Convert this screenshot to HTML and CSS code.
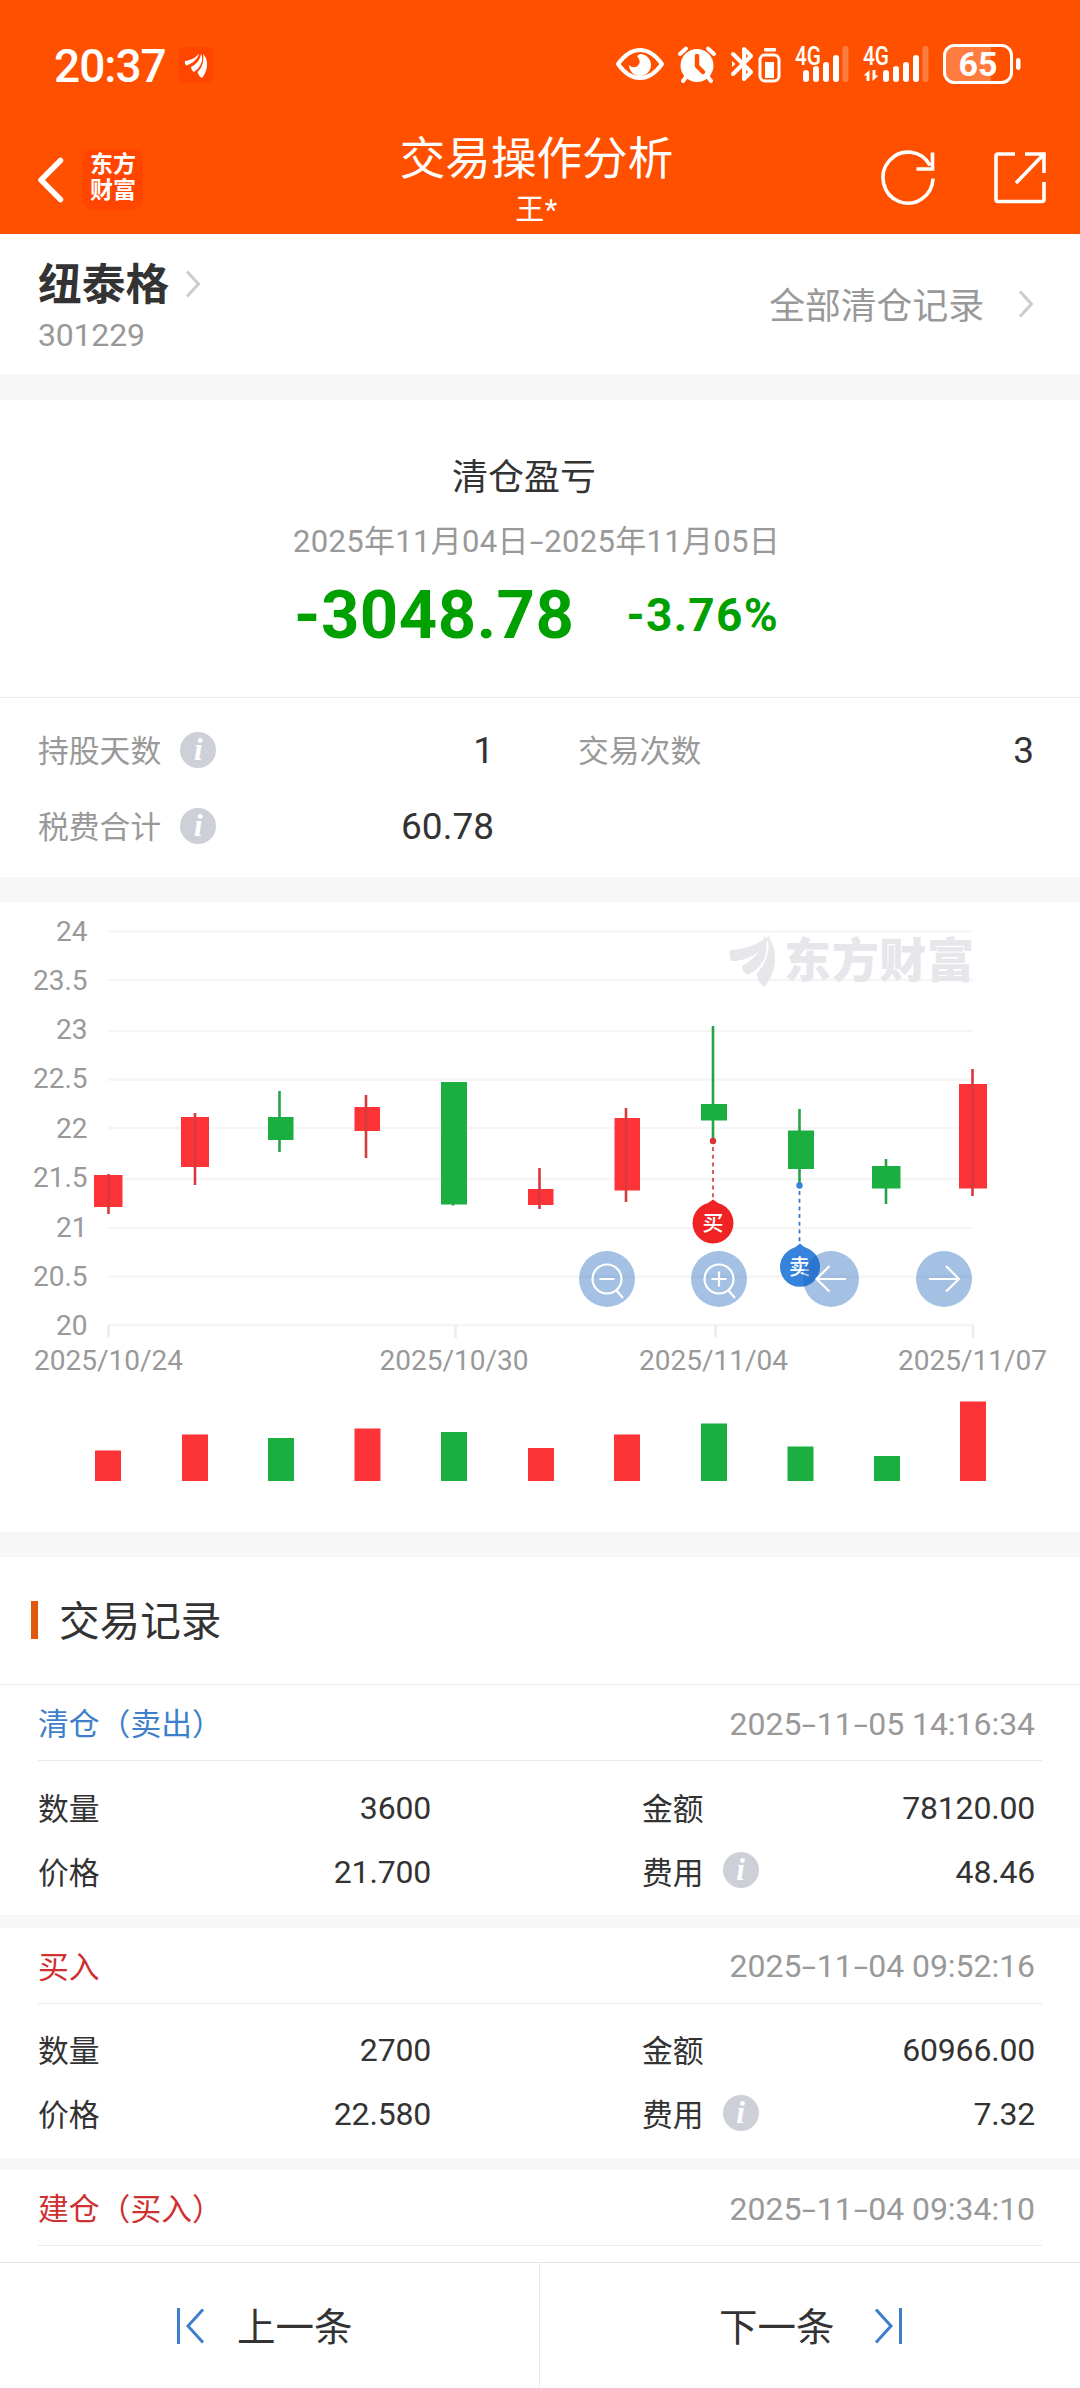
FILE: index.html
```html
<!DOCTYPE html>
<html lang="zh-CN">
<head>
<meta charset="utf-8">
<title>交易操作分析</title>
<link rel="stylesheet" href="styles.css">
</head>
<body>
<div class="screen">
  <header class="header">
    <div class="status">
      <div class="status-left">
        <span class="time">20:37</span>
        <svg class="app-dot" viewBox="0 0 36 36">
          <rect width="36" height="36" rx="7" fill="#ff4500"/>
          <g fill="#fff">
            <path d="M7 14C12 13.500 18 11 21 6.500C20 12 14 17 8 18.500Q6 16 7 14Z"/>
            <path d="M13 20C19 17 22.500 12 23 6.500C26 13 23 20 16 25Q13 23 13 20Z"/>
            <path d="M19.500 25C25 20 26 13 25 7C31 12 30 24 24 31Q21 30 19.500 25Z"/>
          </g>
        </svg>
      </div>
      <div class="status-right">
        <svg class="ic-eye" viewBox="0 0 48 40">
          <path d="M2 20Q12 6 24 6T46 20Q36 34 24 34T2 20Z" fill="none" stroke="#fff" stroke-width="4" stroke-linejoin="round"/>
          <path d="M24 10A11 11 0 1 1 13 21Q17 25 21.500 22Q26 18 21 12Z" fill="#fff"/>
        </svg>
        <svg class="ic-alarm" viewBox="0 0 38 40">
          <circle cx="19" cy="21.500" r="16.500" fill="#fff"/>
          <path d="M2 10L8 4.500M36 10L30 4.500M8 33L5 37M30 33L33 37" stroke="#fff" stroke-width="4" stroke-linecap="round"/>
          <path d="M19 12V22L25 28" fill="none" stroke="#ff5000" stroke-width="4.500" stroke-linecap="round" stroke-linejoin="round"/>
        </svg>
        <svg class="ic-bt" viewBox="0 0 50 40">
          <path d="M2 10L20 28L13 35V5L20 12L2 30" fill="none" stroke="#fff" stroke-width="4" stroke-linejoin="round" stroke-linecap="round"/>
          <path d="M1 17L4.500 20L1 23Z" fill="#fff"/>
          <rect x="29" y="11" width="19" height="26" rx="5" fill="none" stroke="#fff" stroke-width="3"/>
          <rect x="33" y="4" width="12" height="3.500" rx="1" fill="#fff"/>
          <rect x="34" y="18" width="9" height="16" fill="#fff"/>
        </svg>
        <svg class="ic-sim" viewBox="0 0 54 40">
          <text x="0" y="22.500" class="net" textLength="26" lengthAdjust="spacingAndGlyphs">4G</text>
          <g fill="#fff">
            <rect x="8" y="28" width="6" height="12" rx="3"/><rect x="18" y="24" width="6" height="16" rx="3"/>
            <rect x="28" y="20" width="6" height="20" rx="3"/><rect x="38" y="13" width="6" height="27" rx="3"/>
            <rect x="47.500" y="4" width="6" height="36" rx="3" opacity=".25"/>
          </g>
        </svg>
        <svg class="ic-sim2" viewBox="0 0 66 40">
          <text x="0" y="22.500" class="net" textLength="26" lengthAdjust="spacingAndGlyphs">4G</text>
          <path d="M0.500 33.500L6.500 28V39H3.500V33.500ZM15.500 33.500L9.500 39V28H12.500V33.500Z" fill="#fff"/>
          <g fill="#fff">
            <rect x="20" y="28" width="6" height="12" rx="3"/><rect x="30" y="24" width="6" height="16" rx="3"/>
            <rect x="40" y="20" width="6" height="20" rx="3"/><rect x="50" y="13" width="6" height="27" rx="3"/>
            <rect x="59.500" y="4" width="6" height="36" rx="3" opacity=".25"/>
          </g>
        </svg>
        <svg class="ic-bat" viewBox="0 0 78 40">
          <path d="M3 12Q3 3 12 3H48V37H12Q3 37 3 28Z" fill="#fff" opacity=".25"/>
          <rect x="1.500" y="1.500" width="67" height="37" rx="10" fill="none" stroke="#fff" stroke-width="3"/>
          <rect x="73" y="14" width="4.500" height="12" rx="2.200" fill="#fff"/>
          <text x="35" y="32" class="level" text-anchor="middle">65</text>
        </svg>
      </div>
    </div>
    <div class="nav">
      <div class="nav-left">
        <svg class="back" viewBox="0 0 28 48"><path d="M24.500 4.500L5 24L24.500 43.500" fill="none" stroke="#fff" stroke-width="5.500" stroke-linecap="round" stroke-linejoin="round"/></svg>
        <div class="brand"><span>东方</span><span>财富</span></div>
      </div>
      <div class="nav-title"><h1>交易操作分析</h1><p>王*</p></div>
      <div class="nav-right">
        <svg class="reload" viewBox="0 0 54 54"><path d="M51 27.500A25 25.500 0 1 1 48 14.500" fill="none" stroke="#fff" stroke-width="3.600"/><path d="M50.500 1.500V18H34.500" fill="none" stroke="#fff" stroke-width="3.600"/></svg>
        <svg class="share" viewBox="0 0 52 52"><path d="M21 2H4Q2 2 2 4V47.500Q2 49.500 4 49.500H48Q50 49.500 50 47.500V30M31 2H50V21M50 2L22 31" fill="none" stroke="#fff" stroke-width="3.600"/></svg>
      </div>
    </div>
  </header>

  <section class="stock">
    <div class="stock-id">
      <div class="stock-name">纽泰格<svg class="chev" viewBox="0 0 16 28"><path d="M2 1.500L13.500 14L2 26.500" fill="none" stroke="#ccc" stroke-width="3"/></svg></div>
      <div class="stock-code">301229</div>
    </div>
    <div class="all"><span>全部清仓记录</span><svg class="chev" viewBox="0 0 16 28"><path d="M2 1.500L13.500 14L2 26.500" fill="none" stroke="#ccc" stroke-width="3"/></svg></div>
  </section>

  <section class="profit">
    <h2>清仓盈亏</h2>
    <p class="range">2025年11月04日<span class="dash">-</span>2025年11月05日</p>
    <div class="result"><span class="amount">-3048.78</span><span class="rate">-3.76%</span></div>
  </section>

  <section class="stats">
    <div class="stat"><span>持股天数</span><i class="info">i</i><b>1</b></div>
    <div class="stat"><span>交易次数</span><b>3</b></div>
    <div class="stat"><span>税费合计</span><i class="info">i</i><b>60.78</b></div>
  </section>

  <section class="chart">
    <svg viewBox="0 902 1080 630" width="1080" height="630">
      <path class="grid" d="M108 931.500H973M108 980H973M108 1031H973M108 1079.500H973M108 1128H973M108 1179H973M108 1228H973M108 1276.500H973M108 1325H973"/>
      <path class="tick" d="M108.500 1325V1338M455.500 1325V1338M715.500 1325V1338M973 1325V1338"/>
      <g class="mark">
        <path d="M730 950Q752 949 771 935C761 955 746 961 731 961Q729 955 730 950Z"/>
        <path d="M742 966C757 957 762 949 763.500 939L765 935C770 956 762 968 747 975Q742 971 742 966Z"/>
        <path d="M757 973C769 960 770 947 767.500 936C779 949 777 974 764 987Q757 982 757 973Z"/>
        <text x="784" y="977" textLength="190">东方财富</text>
      </g>
      <g class="axis" text-anchor="end">
        <text x="87.500" y="941">24</text><text x="87.500" y="990">23.5</text><text x="87.500" y="1039">23</text>
        <text x="87.500" y="1088">22.5</text><text x="87.500" y="1138">22</text><text x="87.500" y="1187">21.5</text>
        <text x="87.500" y="1236.500">21</text><text x="87.500" y="1285.500">20.5</text><text x="87.500" y="1335">20</text>
      </g>
      <g class="axis" text-anchor="middle">
        <text x="108.500" y="1369.500">2025/10/24</text><text x="454" y="1369.500">2025/10/30</text>
        <text x="713.500" y="1369.500">2025/11/04</text><text x="972.500" y="1369.500">2025/11/07</text>
      </g>
      <g class="up">
        <path d="M94 1175h28.500v32h-28.500zM181 1117h28v50h-28zM354.500 1107h25.500v24h-25.500zM528 1189h25.500v16h-25.500zM614.500 1118h25.500v72.500h-25.500zM959 1084h28v104.500h-28z"/>
        <path class="wick" d="M108.500 1174V1214M195 1113V1185M366 1095V1158M539.500 1168V1209M626 1108V1202M972.500 1069V1196"/>
        <path d="M95 1450.500h26V1481h-26zM182 1434.500h26V1481h-26zM354.500 1428.500h26V1481h-26zM528 1448h26V1481h-26zM614 1434.500h26V1481h-26zM960 1401.500h26V1481h-26z"/>
      </g>
      <g class="down">
        <path class="wick" d="M279.500 1091V1152M453 1190V1205.500M713 1026V1139M799.500 1109V1184M886 1159V1204"/>
        <path d="M268 1117h25.500v23h-25.500zM441 1082h26v122.500h-26zM701 1104h26v16.500h-26zM788 1130.500h26v38.500h-26zM872 1166h28.500v22.500h-28.500z"/>
        <path d="M268 1438h26V1481h-26zM441 1432h26V1481h-26zM701 1423.500h26V1481h-26zM787.500 1446.500h26V1481h-26zM874 1456h26V1481h-26z"/>
      </g>
      <g class="pin" fill="#ef2323">
        <circle cx="713" cy="1141" r="3.200" fill="#d63333"/>
        <path d="M713 1147V1200" stroke="#d0504e" stroke-width="1.800" stroke-dasharray="4 3.700"/>
        <path d="M713 1199.500Q717 1203 722 1204.500A20.500 20.500 0 1 1 704 1204.500Q709 1203 713 1199.500Z"/>
        <text x="713" y="1229.500">买</text>
      </g>
      <g class="pin" fill="#3583dd">
        <circle cx="799.500" cy="1185.500" r="3.200"/>
        <path d="M799.500 1191V1243" stroke="#3a7ccb" stroke-width="1.800" stroke-dasharray="4 3.700"/>
        <path d="M800 1243.500Q804 1247.500 809 1249A20 20 0 1 1 791 1249Q796 1247.500 800 1243.500Z"/>
        <text x="799.500" y="1274">卖</text>
      </g>
      <g class="btn">
        <circle cx="607" cy="1279" r="28"/><circle cx="719" cy="1279" r="28"/>
        <circle cx="831" cy="1279" r="28"/><circle cx="944" cy="1279" r="28"/>
      </g>
      <g fill="none" stroke="#fff" stroke-width="2.200">
        <circle cx="607" cy="1279" r="14.500"/><path d="M599.500 1279H614.500M616 1290L623 1298"/>
        <circle cx="719" cy="1279" r="14.500"/><path d="M711.500 1279H726.500M719 1271.500V1286.500M728 1290L735 1298"/>
        <path d="M846 1279H817M829.500 1266L816.500 1279L829.500 1291.500M929 1279H958.500M946 1266L959 1279L946 1291.500"/>
      </g>
    </svg>
  </section>

  <section class="records">
    <h2 class="records-title">交易记录</h2>
    <article class="record">
      <div class="record-head sell"><span>清仓（卖出）</span><time>2025<span class="dash">-</span>11<span class="dash">-</span>05 14:16:34</time></div>
      <div class="record-body">
        <span>数量</span><b>3600</b><span class="second">金额</span><b>78120.00</b>
        <span>价格</span><b>21.700</b><span class="second">费用<i class="info">i</i></span><b>48.46</b>
      </div>
    </article>
    <article class="record">
      <div class="record-head buy"><span>买入</span><time>2025<span class="dash">-</span>11<span class="dash">-</span>04 09:52:16</time></div>
      <div class="record-body">
        <span>数量</span><b>2700</b><span class="second">金额</span><b>60966.00</b>
        <span>价格</span><b>22.580</b><span class="second">费用<i class="info">i</i></span><b>7.32</b>
      </div>
    </article>
    <article class="record">
      <div class="record-head buy"><span>建仓（买入）</span><time>2025<span class="dash">-</span>11<span class="dash">-</span>04 09:34:10</time></div>
    </article>
  </section>

  <footer class="pager">
    <div class="prev"><svg viewBox="0 0 28 36"><path d="M1.500 0V36M26 1.500L11 18L26 34.500" fill="none" stroke="#3d7fca" stroke-width="3"/></svg><span>上一条</span></div>
    <div class="next"><span>下一条</span><svg viewBox="0 0 28 36"><path d="M26.500 0V36M2 1.500L17 18L2 34.500" fill="none" stroke="#3d7fca" stroke-width="3"/></svg></div>
  </footer>
</div>
</body>
</html>
```
FILE: styles.css
```css
* { box-sizing: border-box; margin: 0; padding: 0; }
body {
  width: 1080px;
  background: #fff;
  color: #333;
  font-family: Roboto, "Noto Sans CJK SC", sans-serif;
}
svg { display: block; flex: none; overflow: visible; }
h1, h2, b { font-weight: 400; }
.screen { height: 2388px; display: flex; flex-direction: column; overflow: hidden; background: #f7f7f7; }
section { background: #fff; flex: none; }

/* status bar and navigation */
.header { flex: none; height: 234px; background: #ff5000; color: #fff; }
.status { height: 128px; padding: 0 59px 0 54px; display: flex; justify-content: space-between; align-items: center; }
.status-left, .status-right { display: flex; align-items: center; }
.time { font-size: 46px; font-weight: 500; letter-spacing: -1px; line-height: 60px; margin-top: 4px; width: 124px; white-space: nowrap; }
.app-dot { width: 36px; height: 36px; margin-top: 2px; }
.ic-eye { width: 48px; height: 40px; margin-right: 14px; }
.ic-alarm { width: 38px; height: 40px; margin-right: 15px; }
.ic-bt { width: 50px; height: 40px; margin-right: 14px; }
.ic-sim { width: 54px; height: 40px; margin-right: 14px; margin-top: -4px; }
.ic-sim2 { width: 66px; height: 40px; margin-right: 14px; margin-top: -4px; }
.ic-bat { width: 78px; height: 40px; }
.net { font-size: 25px; font-weight: 500; fill: #fff; }
.level { font-size: 34px; font-weight: 700; fill: #fff; }

.nav { height: 106px; display: grid; grid-template-columns: 380px 313px 1fr; }
.nav-left { display: flex; align-items: center; padding: 0 0 4px 36px; height: 104px; }
.back { width: 28px; height: 48px; margin-top: 4px; }
.brand { width: 60px; height: 61px; margin: 2px 0 0 19px; border-radius: 10px; background: #ff4500; display: flex; flex-direction: column; align-items: center; justify-content: center; font-size: 23px; line-height: 26px; font-weight: 700; padding-bottom: 2px; }
.nav-title { text-align: center; }
.nav-title h1 { font-size: 45.600px; line-height: 60px; padding-top: 2px; }
.nav-title p { font-size: 29px; line-height: 40px; letter-spacing: .5px; }
.nav-right { display: flex; justify-content: space-between; align-items: flex-start; padding: 24px 34px 0 189px; }
.reload { width: 54px; height: 54px; margin-top: -1px; }
.share { width: 52px; height: 52px; }

/* stock row */
.stock { height: 140px; display: flex; justify-content: space-between; align-items: center; padding: 2px 46px 0 38px; margin-bottom: 26px; }
.stock-id { margin-top: 4px; }
.stock-name { display: flex; align-items: center; gap: 16px; font-size: 43.700px; font-weight: 700; line-height: 56px; }
.chev { width: 16px; height: 28px; }
.stock-name .chev { margin-top: -2px; }
.stock-code { font-size: 32px; line-height: 46px; color: #999; letter-spacing: -.2px; margin-top: -1px; }
.all { display: flex; align-items: center; gap: 34px; font-size: 35.800px; color: #999; margin-top: -2px; }
.all span { padding-bottom: 2px; }

/* closing profit */
.profit { height: 298px; padding: 52px 7px 0 0; text-align: center; border-bottom: 1px solid #ebebeb; }
.profit h2 { font-size: 36px; line-height: 52px; margin-right: 25px; }
.range { font-size: 31px; line-height: 46px; margin-top: 15px; color: #999; letter-spacing: .3px; }
.dash { display: inline-block; width: 15.500px; text-align: center; transform: scaleX(1.600); }
.result { display: flex; align-items: center; justify-content: center; gap: 52px; color: #00a000; font-weight: 700; line-height: 92px; margin-top: 4px; }
.amount { font-size: 67px; letter-spacing: .5px; }
.rate { font-size: 46px; letter-spacing: 1.300px; }

/* stats */
.stats { height: 179px; padding: 14px 46px 0 38px; display: grid; grid-template-columns: 456px 1fr; column-gap: 84px; grid-auto-rows: 76px; margin-bottom: 25px; }
.stat { display: flex; align-items: center; font-size: 30.800px; color: #999; }
.stat span { padding-bottom: 3px; }
.stat b { margin-left: auto; font-size: 37px; color: #333; padding-top: 1px; }
.info { flex: none; width: 36px; height: 36px; margin-left: 19px; border-radius: 50%; background: #cdd1d7; color: #fff; font: italic 700 31px/35px "Liberation Serif", serif; text-align: center; }

/* candlestick chart */
.chart { height: 630px; margin-bottom: 25px; }
.grid { stroke: #f5f5f6; stroke-width: 2.500; }
.tick { stroke: #ececec; stroke-width: 2.500; }
.axis { font-size: 28px; fill: #999; }
.mark { fill: #e7e6eb; }
.mark text { font-size: 47px; font-weight: 900; }
.up { fill: #fc3438; }
.down { fill: #1aaf40; }
.wick { stroke-width: 2.600; }
.up .wick { stroke: #d8393c; }
.down .wick { stroke: #27a347; }
.pin text { fill: #fff; font-size: 21px; font-weight: 500; text-anchor: middle; }
.btn { fill: #1b64b9; fill-opacity: .4; }

/* trade records */
.records { height: 705px; background: #f7f7f7; }
.records-title { display: flex; align-items: center; gap: 21px; height: 128px; padding: 0 0 4px 31px; background: #fff; border-bottom: 1px solid #ebebeb; font-size: 40.600px; }
.records-title::before { content: ""; width: 7px; height: 38px; margin-top: 2px; background: #e0590f; }
.record { background: #fff; padding: 0 38px; height: 230px; margin-bottom: 12.500px; }
.record-head { height: 76px; display: flex; justify-content: space-between; align-items: center; border-bottom: 1px solid #ebebeb; font-size: 30.800px; padding: 0 7px 0 0; }
.record-head > span { padding-bottom: 2px; }
.record-head time { font-size: 32px; color: #999; letter-spacing: -.05px; margin-top: 2px; }
.sell { color: #3d7fca; }
.buy { color: #cf3030; }
.record-body { display: grid; grid-template-columns: 120px 273px 240px 1fr; grid-auto-rows: 64px; align-items: center; padding: 13px 7px 0 0; font-size: 30.800px; }
.record-body b { text-align: right; font-size: 32px; letter-spacing: -.2px; padding-top: 3px; }
.second { display: flex; align-items: center; padding-left: 211px; white-space: nowrap; }

/* previous / next */
.pager { flex: none; height: 126px; background: #fff; border-top: 1px solid #e6e6e6; display: grid; grid-template-columns: 540px 1fr; font-size: 38.500px; }
.prev, .next { display: flex; align-items: center; }
.prev { padding-left: 177px; gap: 32px; border-right: 1px solid #ebebeb; }
.next { padding-left: 179px; gap: 39px; }
.pager span { padding-bottom: 3px; }
.pager svg { width: 28px; height: 36px; }
```
